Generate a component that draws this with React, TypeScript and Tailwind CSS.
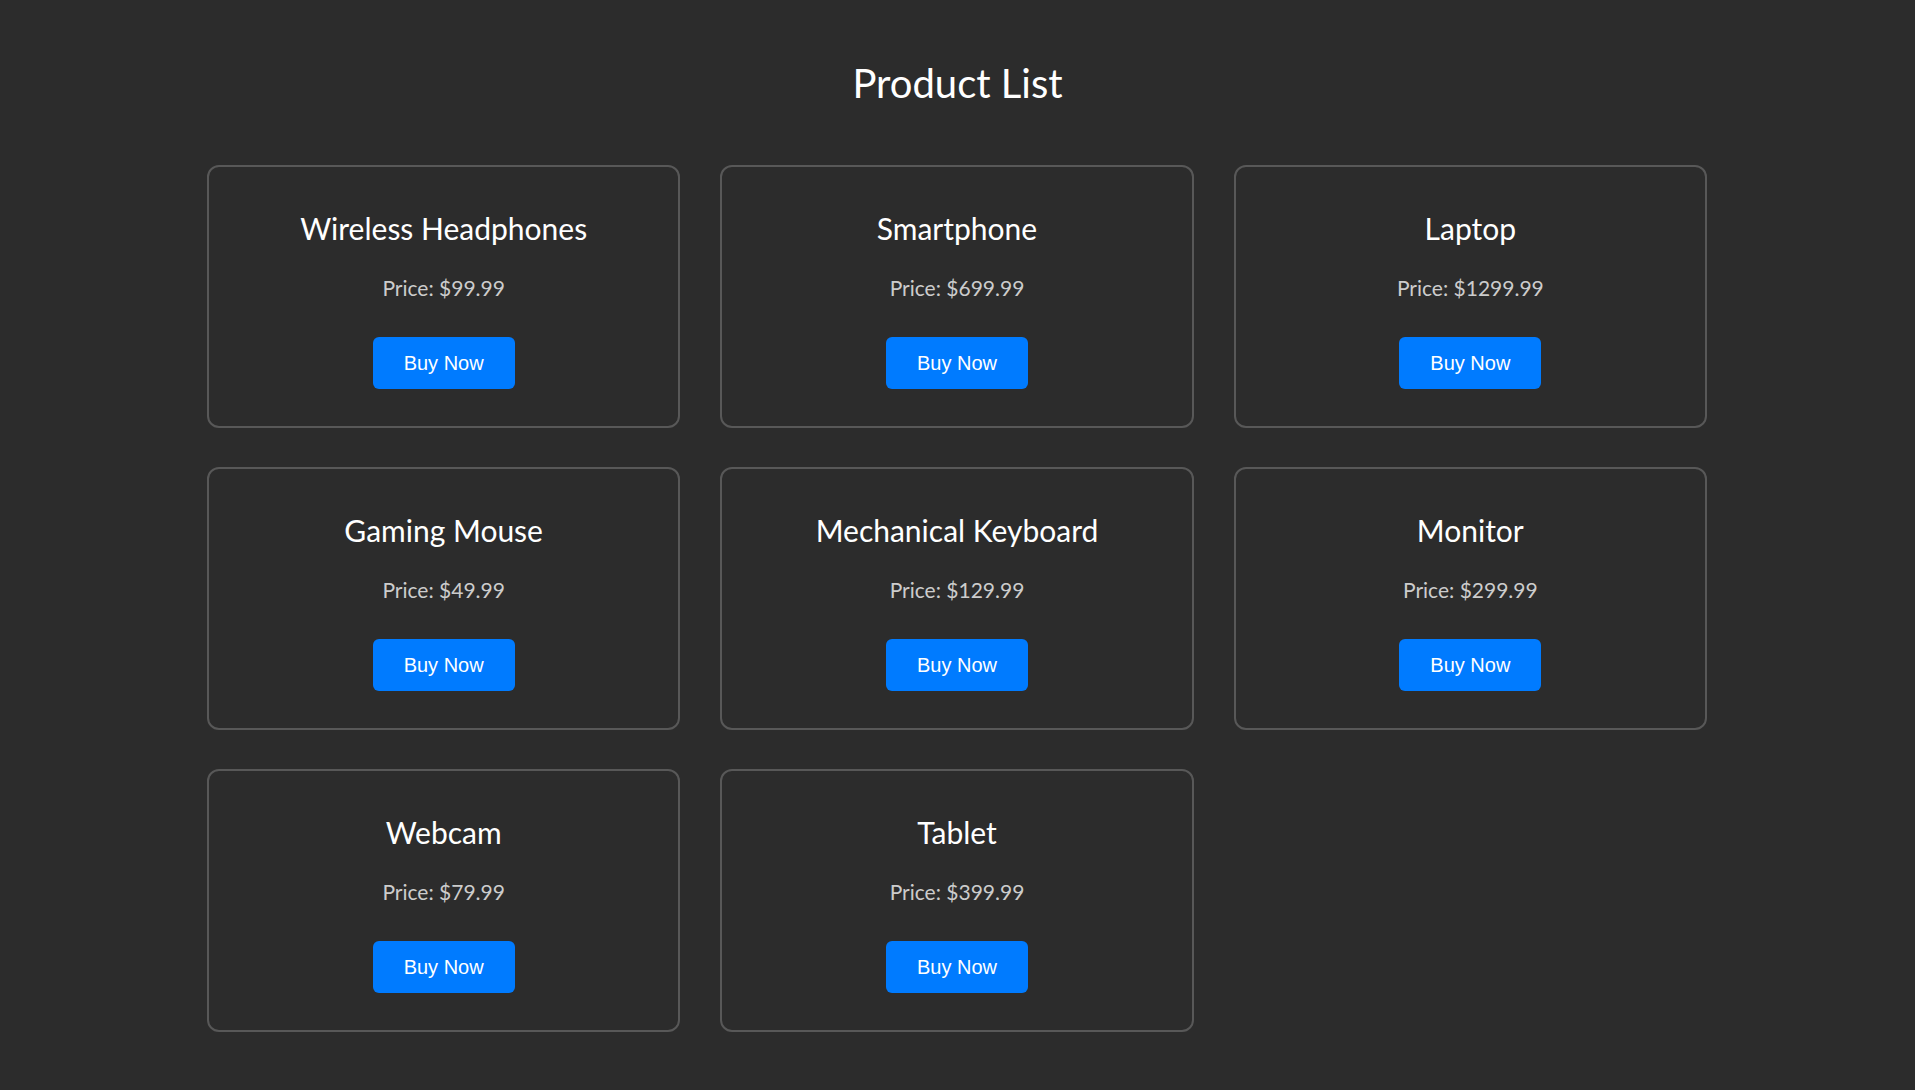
const products = [
  { name: "Wireless Headphones", price: "$99.99" },
  { name: "Smartphone", price: "$699.99" },
  { name: "Laptop", price: "$1299.99" },
  { name: "Gaming Mouse", price: "$49.99" },
  { name: "Mechanical Keyboard", price: "$129.99" },
  { name: "Monitor", price: "$299.99" },
  { name: "Webcam", price: "$79.99" },
  { name: "Tablet", price: "$399.99" },
];

export default function App() {
  return (
    <div className="min-h-screen bg-[#2c2c2c] pt-[59px] font-['Lato',sans-serif] text-white">
      <h1 className="text-center text-[40px] leading-[48px] font-normal mb-[58px]">
        Product List
      </h1>

      <div className="mx-auto w-[1501px] pr-[1px]">
        <div className="grid grid-cols-3 gap-x-10 gap-y-[39px]">
          {products.map((p) => (
            <ProductCard key={p.name} name={p.name} price={p.price} />
          ))}
        </div>
      </div>
    </div>
  );
}

function ProductCard({ name, price }: { name: string; price: string }) {
  return (
    <div className="flex flex-col items-center rounded-[12px] border-2 border-[#585858] pt-[43px] pb-[37px] text-center">
      <h2 className="text-[30px] leading-[36px] font-normal text-white">
        {name}
      </h2>
      <p className="mt-[30px] text-[21px] leading-[24px] text-[#cccccc]">
        Price: {price}
      </p>
      <button className="mt-[37px] h-[52px] rounded-[6px] bg-[#007bff] px-[31px] font-['Liberation_Sans',Arial,sans-serif] text-[20px] text-white">
        Buy Now
      </button>
    </div>
  );
}
